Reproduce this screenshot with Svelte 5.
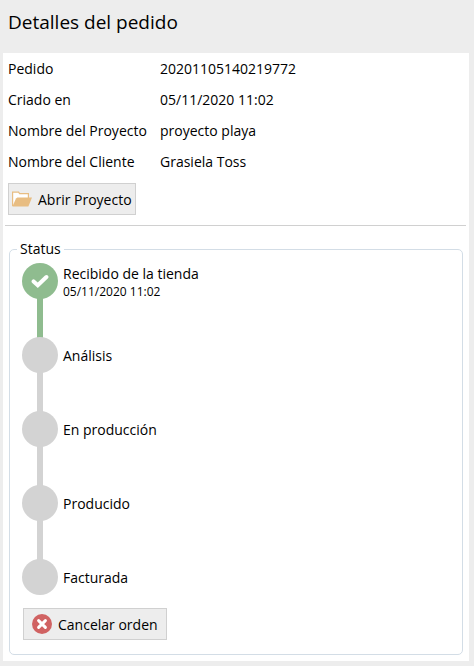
<script>
  const details = [
    { label: 'Pedido', value: '20201105140219772' },
    { label: 'Criado en', value: '05/11/2020 11:02' },
    { label: 'Nombre del Proyecto', value: 'proyecto playa' },
    { label: 'Nombre del Cliente', value: 'Grasiela Toss' }
  ];

  const steps = [
    { name: 'Recibido de la tienda', date: '05/11/2020 11:02', done: true },
    { name: 'Análisis' },
    { name: 'En producción' },
    { name: 'Producido' },
    { name: 'Facturada' }
  ];
</script>

<main>
  <h1>Detalles del pedido</h1>

  <div class="panel">
    <dl>
      {#each details as item}
        <dt>{item.label}</dt>
        <dd>{item.value}</dd>
      {/each}
    </dl>

    <button type="button" class="open">
      <svg width="20" height="16" viewBox="0 0 20 16" aria-hidden="true">
        <path d="M.6 14.5V1.1h6l1 1.5h8.8V8L14 14z" fill="#fff" />
        <path d="M.6 15V1.1h6l1 1.5h8.8V7" fill="none" stroke="#e8bd82" stroke-width="1.2" />
        <path d="M4 7.6l1.4-1H20L16.4 15.6H.4z" fill="#e8bd82" />
      </svg>
      <span>Abrir Proyecto</span>
    </button>

    <hr />

    <fieldset>
      <legend>Status</legend>
      <ol>
        {#each steps as step}
          <li class:done={step.done}>
            <span class="dot">
              {#if step.done}
                <svg width="18" height="14" viewBox="0 0 18 14" aria-hidden="true">
                  <path
                    d="M2.6 7.4l4.2 3.8L15.4 3"
                    fill="none"
                    stroke="#fff"
                    stroke-width="4"
                    stroke-linecap="round"
                  />
                </svg>
              {/if}
            </span>
            <div class="text">
              <span>{step.name}</span>
              {#if step.date}<small>{step.date}</small>{/if}
            </div>
          </li>
        {/each}
      </ol>
      <button type="button" class="cancel">
        <svg width="20" height="20" viewBox="0 0 20 20" aria-hidden="true">
          <circle cx="10" cy="10" r="10" fill="#d06262" />
          <path d="M6.6 6.6l6.8 6.8M13.4 6.6l-6.8 6.8" stroke="#fff" stroke-width="3" stroke-linecap="round" />
        </svg>
        <span>Cancelar orden</span>
      </button>
    </fieldset>
  </div>
</main>

<style>
  :global(body) {
    background: #fff;
  }

  main {
    box-sizing: border-box;
    margin: 0 2px 1px 0;
    padding: 0 5px 5px 3px;
    background: #ededed;
    color: #000;
    font: 14px/20px 'Segoe UI', 'Open Sans', sans-serif;
  }

  h1 {
    margin: 0;
    padding: 8px 5px 17px;
    font-size: 19px;
    line-height: 28px;
    font-weight: 400;
  }

  .panel {
    padding: 0 3px 6px 2px;
    background: #fff;
  }

  dl {
    display: grid;
    grid-template-columns: 152px 1fr;
    grid-auto-rows: 31px;
    align-items: center;
    margin: 0;
    padding: 0 3px 6px;
  }

  dd {
    margin: 0;
  }

  button {
    display: flex;
    align-items: center;
    gap: 6px;
    box-sizing: border-box;
    height: 32px;
    border: 1px solid #d0d0d0;
    background: #ededed;
    color: #000;
    font: inherit;
    white-space: nowrap;
  }

  button span,
  .text {
    padding-top: 2px;
  }

  .open {
    margin-left: 3px;
    padding: 0 3px;
  }

  hr {
    height: 1px;
    margin: 10px 0 13px;
    border: 0;
    background: #d0d0d0;
  }

  fieldset {
    min-width: 0;
    margin: 0 3px 0 4px;
    padding: 4px 12px 14px;
    border: 1px solid #d3dde6;
    border-radius: 5px;
  }

  legend {
    margin-left: -5px;
    padding: 0 3px;
  }

  ol {
    display: grid;
    gap: 38px;
    margin: 0 0 13px;
    padding: 0;
    list-style: none;
  }

  li {
    --tone: #d3d3d3;
    position: relative;
    display: flex;
    align-items: center;
    gap: 5px;
    height: 36px;
  }

  .done {
    --tone: #8fbc8f;
  }

  li:not(:last-child)::after {
    content: '';
    position: absolute;
    top: 35px;
    left: 15px;
    width: 6px;
    height: 40px;
    background: var(--tone);
  }

  .dot {
    display: grid;
    place-items: center;
    width: 36px;
    height: 36px;
    border-radius: 50%;
    background: var(--tone);
  }

  .text {
    display: grid;
  }

  small {
    font-size: 12px;
    line-height: 16px;
  }

  .cancel {
    padding: 0 8px;
    margin-left: 1px;
  }
</style>
